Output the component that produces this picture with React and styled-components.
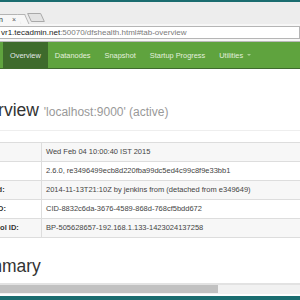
import React from "react";
import styled, { createGlobalStyle } from "styled-components";

const GlobalStyle = createGlobalStyle`
  html, body {
    margin: 0;
    padding: 0;
    background: #fff;
  }
  body {
    font-family: "Liberation Sans", Arial, sans-serif;
  }
`;

const Frame = styled.div`
  width: 300px;
  height: 300px;
  overflow: hidden;
  display: flex;
  flex-direction: column;
  background: #fff;
`;

const WindowEdge = styled.div`
  flex-shrink: 0;
  height: ${(p) => p.$h}px;
  background: #1b6d70;
`;

const TabStrip = styled.div`
  flex-shrink: 0;
  height: 22px;
  background: #ededed;
  display: flex;
  align-items: flex-end;
`;

const Tab = styled.div`
  position: relative;
  margin-left: -100px;
  width: 120px;
  height: 10px;
  background: #f7f7f7;
  border-top: 1px solid #b4b4b4;
  display: flex;
  align-items: center;
  justify-content: flex-end;
  gap: 9px;
  padding-right: 4px;
  box-sizing: border-box;
  font-size: 7.5px;
  color: #333;
  white-space: nowrap;

  &::after {
    content: "";
    position: absolute;
    right: -5px;
    top: -1px;
    bottom: 0;
    width: 7px;
    background: #f7f7f7;
    border-top: 1px solid #b4b4b4;
    border-right: 1px solid #b4b4b4;
    transform: skewX(24deg);
    transform-origin: top;
  }
`;

const TabClose = styled.span`
  font-size: 7px;
  color: #555;
`;

const NewTab = styled.div`
  margin: 0 0 2px 9px;
  width: 12px;
  height: 7px;
  background: #e3e3e3;
  border: 1px solid #a9a9a9;
  border-radius: 1px;
  transform: skewX(25deg);
`;

const Toolbar = styled.div`
  flex-shrink: 0;
  height: 17px;
  background: #f7f7f7;
  border-bottom: 1px solid #b9b9b9;
  display: flex;
  align-items: flex-start;
`;

const AddressBar = styled.div`
  margin: 2px 0 0 -20px;
  flex: 1;
  height: 11px;
  background: #fff;
  border: 1px solid #b5b5b5;
  padding-left: 20px;
  font-size: 8px;
  line-height: 11px;
  color: #7a7a7a;
  white-space: nowrap;
  overflow: hidden;
`;

const Host = styled.span`
  color: #222;
`;

const Navbar = styled.div`
  flex-shrink: 0;
  height: 26px;
  background: #5fa33e;
  border-bottom: 1px solid #3f6b2d;
  display: flex;
  padding-left: 3px;
`;

const NavLink = styled.div`
  display: flex;
  align-items: center;
  gap: 4px;
  padding: 0 7px;
  font-size: 7.4px;
  white-space: nowrap;
  color: ${(p) => (p.$active ? "#e2e8ea" : "#e4f0de")};
  background: ${(p) => (p.$active ? "#3e6b2c" : "transparent")};
`;

const Caret = styled.span`
  width: 0;
  height: 0;
  border-left: 2.5px solid transparent;
  border-right: 2.5px solid transparent;
  border-top: 2.5px solid #a9cf96;
`;

const Content = styled.div`
  flex: 1;
  overflow: hidden;
`;

const Container = styled.div`
  margin-left: -34px;
  width: 420px;
`;

const PageHeader = styled.div`
  padding-top: ${(p) => p.$top}px;
  padding-bottom: 7px;
  border-bottom: ${(p) => (p.$ruled ? "1px solid #eee" : "none")};
`;

const Title = styled.h1`
  margin: 0;
  font-size: 17.5px;
  line-height: 21px;
  font-weight: normal;
  color: #333;
  white-space: nowrap;
`;

const Sub = styled.small`
  font-size: 12px;
  color: #999;
`;

const Table = styled.table`
  margin-top: 11px;
  width: 100%;
  border-collapse: collapse;
  border: 1px solid #ddd;
  font-size: 7.5px;
  line-height: 10px;
  color: #444;

  tr:nth-child(odd) {
    background: #f7f7f7;
  }

  th,
  td {
    padding: 4px;
    border: 1px solid #ddd;
    text-align: left;
    white-space: nowrap;
  }

  th {
    width: 69px;
    padding-left: 1px;
    font-weight: bold;
    color: #333;
  }
`;

const Scrollbar = styled.div`
  flex-shrink: 0;
  height: 8px;
  background: #f1f1f1;
  border-top: 2px solid #e2e2e2;
  padding-bottom: 1px;
  margin-bottom: 2px;
`;

const Thumb = styled.div`
  width: 218px;
  height: 8px;
  background: #c1c1c1;
`;

const rows = [
  ["Started:", "Wed Feb 04 10:00:40 IST 2015"],
  ["Version:", "2.6.0, re3496499ecb8d220fba99dc5ed4c99c8f9e33bb1"],
  ["Compiled:", "2014-11-13T21:10Z by jenkins from (detached from e349649)"],
  ["Cluster ID:", "CID-8832c6da-3676-4589-868d-768cf5bdd672"],
  ["Block Pool ID:", "BP-505628657-192.168.1.133-1423024137258"],
];

const navItems = ["Overview", "Datanodes", "Snapshot", "Startup Progress"];

export default function App() {
  return (
    <>
      <GlobalStyle />
      <Frame>
        <WindowEdge $h={2} />
        <TabStrip>
          <Tab>
            <span>Namenode information</span>
            <TabClose>×</TabClose>
          </Tab>
          <NewTab />
        </TabStrip>
        <Toolbar>
          <AddressBar>
            <Host>vr1.tecadmin.net</Host>:50070/dfshealth.html#tab-overview
          </AddressBar>
        </Toolbar>
        <Navbar>
          {navItems.map((item, i) => (
            <NavLink key={item} $active={i === 0}>
              {item}
            </NavLink>
          ))}
          <NavLink>
            Utilities <Caret />
          </NavLink>
        </Navbar>
        <Content>
          <Container>
            <PageHeader $top={31} $ruled>
              <Title>
                Overview <Sub>'localhost:9000' (active)</Sub>
              </Title>
            </PageHeader>
            <Table>
              <tbody>
                {rows.map(([label, value]) => (
                  <tr key={label}>
                    <th>{label}</th>
                    <td>{value}</td>
                  </tr>
                ))}
              </tbody>
            </Table>
            <PageHeader $top={18}>
              <Title>Summary</Title>
            </PageHeader>
          </Container>
        </Content>
        <Scrollbar>
          <Thumb />
        </Scrollbar>
        <WindowEdge $h={4} />
      </Frame>
    </>
  );
}
